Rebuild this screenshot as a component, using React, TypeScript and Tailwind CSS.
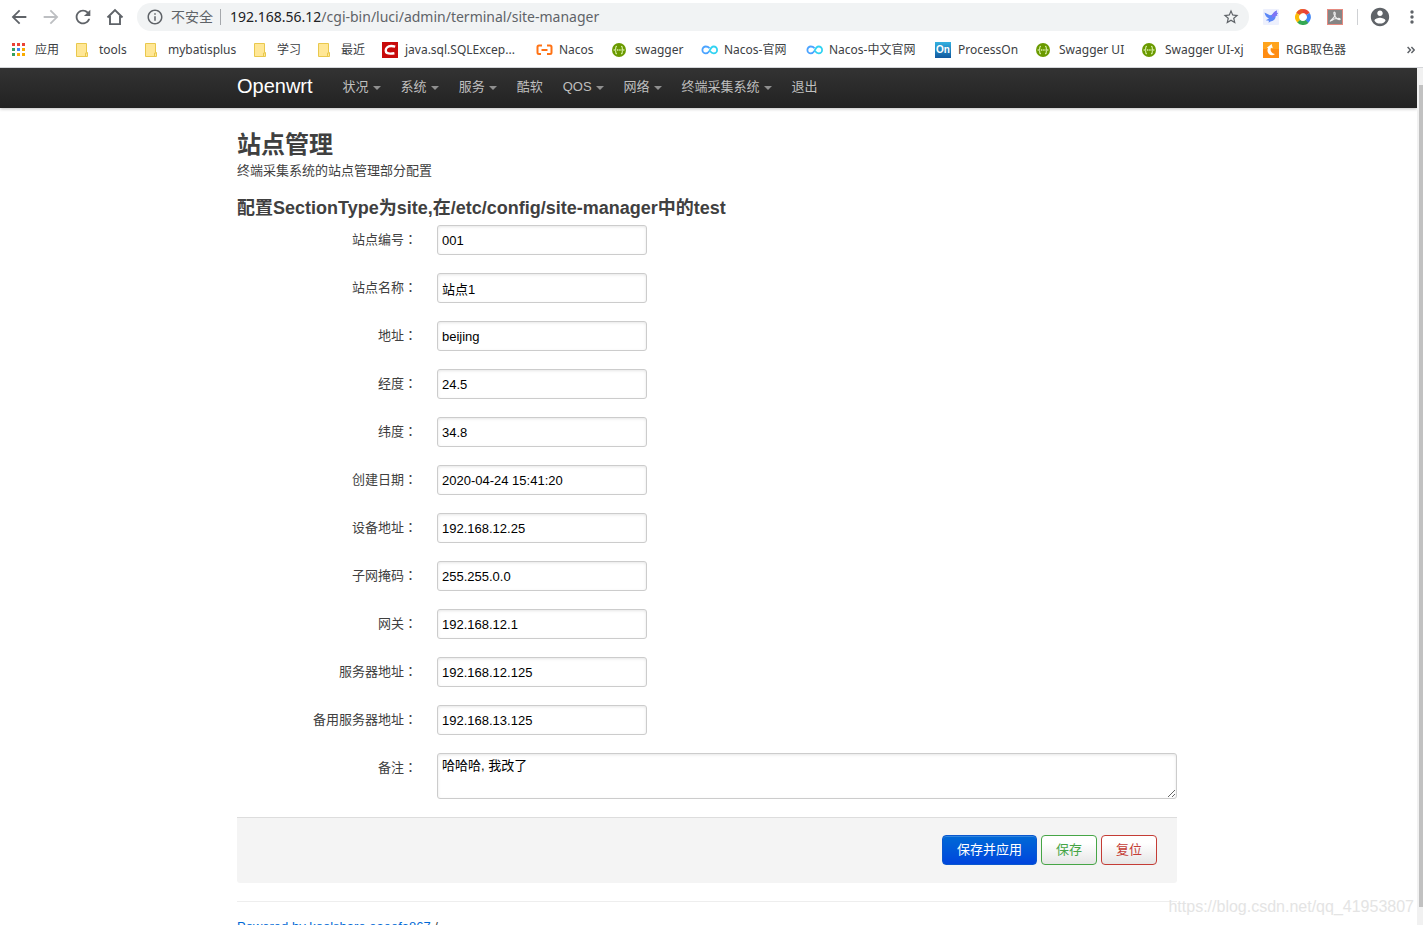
import type { ReactNode } from "react";

const cjkSans = "font-['Liberation_Sans','Noto_Sans_CJK_SC',sans-serif]";
const chromeSans = "font-['Noto_Sans','Noto_Sans_CJK_SC',sans-serif]";

function Glyph({ d, className }: { d: string; className: string }) {
  return (
    <svg viewBox="0 0 24 24" className={className} fill="currentColor" aria-hidden="true">
      <path d={d} />
    </svg>
  );
}

function AppsIcon() {
  const colors = ["#ea4335", "#ea4335", "#ea4335", "#34a060", "#4285f4", "#f9ab00", "#34a060", "#f9ab00", "#f9ab00"];
  return (
    <svg width="13" height="13" viewBox="0 0 13 13" aria-hidden="true">
      {colors.map((c, i) => (
        <rect key={i} x={(i % 3) * 5} y={Math.floor(i / 3) * 5} width="3" height="3" fill={c} />
      ))}
    </svg>
  );
}

function FolderIcon() {
  return (
    <svg width="12" height="14" viewBox="0 0 12 14" aria-hidden="true">
      <path d="M.5.5h10v9h1v4H.5z" fill="#ffe796" stroke="#e9c84d" />
      <path d="M9.5 13.500v-3.500h1.500" fill="none" stroke="#e9c84d" />
    </svg>
  );
}

function CsdnIcon() {
  return (
    <svg width="16" height="16" viewBox="0 0 16 16" aria-hidden="true">
      <rect width="16" height="16" fill="#c80a0a" />
      <path d="M13.200 4.600C10 3.700 6.800 3.700 5 5.500c-1.700 1.700-1.700 4.300 0 5.400 1.800 1 4.500.8 7.400.3" fill="none" stroke="#fff" strokeWidth="2.400" />
    </svg>
  );
}

function NacosIcon() {
  return (
    <svg width="17" height="16" viewBox="0 0 17 16" fill="none" stroke="#ff7214" strokeWidth="2" aria-hidden="true">
      <path d="M6 3.500H3Q1.500 3.500 1.500 5v5.500Q1.500 12 3 12h2M11 3.500h3q1.500 0 1.500 1.500v5.500Q15.500 12 14 12h-3M5.500 8h6" />
    </svg>
  );
}

function SwaggerIcon() {
  return (
    <svg width="14" height="14" viewBox="0 0 14 14" fill="none" aria-hidden="true">
      <circle cx="7" cy="7" r="7" fill="#6a9a00" />
      <path d="M5 3.200c-1.300 0-1.200.8-1.200 1.800S3.500 6.700 2.500 7c1 .3 1.300.9 1.300 2s-.1 1.800 1.200 1.800M9 3.200c1.300 0 1.200.8 1.200 1.800s.3 1.700 1.300 2c-1 .3-1.300.9-1.300 2s.1 1.800-1.200 1.800" stroke="#d9f0a8" strokeWidth="1.100" />
      <path d="M4.800 7h4.800" stroke="#d9f0a8" strokeWidth="1.400" strokeDasharray="1.200 .6" />
    </svg>
  );
}

function InfinityIcon() {
  return (
    <svg width="17" height="10" viewBox="0 0 17 10" fill="none" strokeWidth="1.800" aria-hidden="true">
      <path d="M8.500 3.200C7.500 2 6.200 1.500 4.800 1.500a3.400 3.400 0 0 0 0 6.800c1.500 0 2.700-.9 3.700-2.300" stroke="#4aa3ff" />
      <path d="M8.500 6c1-2.500 2.200-4.500 4.200-4.500a3.400 3.400 0 0 1 0 6.800c-1.600 0-2.700-.9-3.500-2" stroke="#31d3f2" />
    </svg>
  );
}

function ProcessOnIcon() {
  return (
    <span className="flex size-4 items-center justify-center bg-linear-to-b from-[#35b1e0] to-[#12599f] font-['Liberation_Sans',sans-serif] text-[10px] leading-none font-bold text-white">
      On
    </span>
  );
}

function PickerIcon() {
  return (
    <svg width="16" height="16" viewBox="0 0 16 16" aria-hidden="true">
      <rect width="16" height="16" fill="#ff8c12" />
      <rect width="16" height="7" fill="#ffa41c" />
      <path d="M3.800 5.800 8.600 2l1.200 4.200-1.900-.5c-.9 2.600.1 5.700 4.100 6.300-2 2-5.300 1.700-6.800-.9-1-1.800-.9-3.700-.1-5.100z" fill="#fff" />
    </svg>
  );
}

type Bookmark = { label: string; icon: ReactNode; width: string };

const bookmarks: Bookmark[] = [
  { label: "应用", icon: <AppsIcon />, width: "w-[64px]" },
  { label: "tools", icon: <FolderIcon />, width: "w-[69px]" },
  { label: "mybatisplus", icon: <FolderIcon />, width: "w-[109px]" },
  { label: "学习", icon: <FolderIcon />, width: "w-[64px]" },
  { label: "最近", icon: <FolderIcon />, width: "w-[64px]" },
  { label: "java.sql.SQLExcep...", icon: <CsdnIcon />, width: "w-[154px]" },
  { label: "Nacos", icon: <NacosIcon />, width: "w-[76px]" },
  { label: "swagger", icon: <SwaggerIcon />, width: "w-[89px]" },
  { label: "Nacos-官网", icon: <InfinityIcon />, width: "w-[105px]" },
  { label: "Nacos-中文官网", icon: <InfinityIcon />, width: "w-[129px]" },
  { label: "ProcessOn", icon: <ProcessOnIcon />, width: "w-[101px]" },
  { label: "Swagger UI", icon: <SwaggerIcon />, width: "w-[106px]" },
  { label: "Swagger UI-xj", icon: <SwaggerIcon />, width: "w-[121px]" },
  { label: "RGB取色器", icon: <PickerIcon />, width: "w-[100px]" },
];

function ToolButton({ label, children }: { label: string; children: ReactNode }) {
  return (
    <button type="button" aria-label={label} className="flex h-8 w-8 shrink-0 items-center justify-center text-[#5f6368]">
      {children}
    </button>
  );
}

function BrowserBar() {
  return (
    <header className={`${chromeSans} shrink-0 border-b border-[#d4d6d9] bg-white`}>
      <div className="flex h-[34px] items-center pl-[3px]">
        <ToolButton label="后退">
          <Glyph className="size-[22px]" d="M20 11H7.830l5.590-5.590L12 4l-8 8 8 8 1.410-1.410L7.830 13H20v-2z" />
        </ToolButton>
        <ToolButton label="前进">
          <Glyph className="size-[22px] text-[#bdbfc2]" d="M4 11h12.170l-5.590-5.590L12 4l8 8-8 8-1.410-1.410L16.170 13H4v-2z" />
        </ToolButton>
        <ToolButton label="重新加载">
          <Glyph
            className="size-[22px]"
            d="M17.650 6.350C16.200 4.900 14.210 4 12 4c-4.420 0-7.990 3.580-7.990 8s3.570 8 7.990 8c3.730 0 6.840-2.550 7.730-6h-2.080c-.82 2.330-3.040 4-5.650 4-3.310 0-6-2.690-6-6s2.690-6 6-6c1.660 0 3.140.69 4.220 1.780L13 11h7V4l-2.350 2.350z"
          />
        </ToolButton>
        <ToolButton label="主页">
          <svg width="18" height="18" viewBox="0 0 18 18" fill="none" stroke="currentColor" strokeWidth="1.900" aria-hidden="true">
            <path d="M1.500 9.500 9 2l7.500 7.500M4 8v8.100h10V8" />
          </svg>
        </ToolButton>
        <div className="ml-[6px] flex h-7 min-w-0 grow items-center rounded-full bg-[#f1f3f4] pr-[9px] pl-[9px] text-sm text-[#5f6368]">
          <Glyph
            className="size-[18px] shrink-0"
            d="M11 7h2v2h-2zm0 4h2v6h-2zm1-9C6.480 2 2 6.480 2 12s4.480 10 10 10 10-4.480 10-10S17.520 2 12 2zm0 18c-4.410 0-8-3.590-8-8s3.590-8 8-8 8 3.590 8 8-3.590 8-8 8z"
          />
          <span className="ml-[7px] shrink-0">不安全</span>
          <span className="mr-[9px] ml-[7px] h-4 w-px shrink-0 bg-[#a5a8ac]" />
          <span className="grow truncate">
            <span className="text-[#202124]">192.168.56.12</span>/cgi-bin/luci/admin/terminal/site-manager
          </span>
          <button type="button" aria-label="为此网页添加书签" className="shrink-0">
            <Glyph
              className="size-[18px]"
              d="M22 9.240l-7.190-.62L12 2 9.190 8.630 2 9.240l5.460 4.730L5.820 21 12 17.270 18.180 21l-1.630-7.030L22 9.240zM12 15.400l-3.760 2.270 1-4.280-3.320-2.880 4.380-.38L12 6.100l1.710 4.040 4.380.38-3.320 2.880 1 4.280L12 15.400z"
            />
          </button>
        </div>
        <div className="ml-[6px] flex shrink-0 items-center">
          <ToolButton label="迅雷">
            <svg width="16" height="16" viewBox="0 0 16 16" aria-hidden="true">
              <rect width="16" height="16" rx="1" fill="#edf0fd" />
              <path d="M1.500 3.500 7 6.300 9 5.800C11 3 12.500 2 14 1.500l-.6 2.200 1.600.3-1.300 1.500.8.8-1.800.7c0 3-1.500 4.700-5.200 5.500l-2 1.300.5-2-3.200-.5L6 9.500C3.500 8.500 2 6.500 1.500 3.500z" fill="#5b87f7" />
              <path d="M9 5.800C11 3 12.500 2 14 1.500l-.6 2.200 1.600.3-1.300 1.500.8.8-1.800.7L9 9z" fill="#7e74f5" />
            </svg>
          </ToolButton>
          <ToolButton label="扩展程序">
            <svg width="16" height="16" viewBox="0 0 16 16" fill="none" strokeWidth="4" aria-hidden="true">
              <path d="M3 5A6 6 0 0 1 8 2" stroke="#fbbc05" />
              <path d="M8 2a6 6 0 0 1 5 3" stroke="#ea4335" />
              <path d="M3 5a6 6 0 0 1 5-3" stroke="#e8552d" />
              <path d="M13 5a6 6 0 0 1-1.500 7.900" stroke="#4285f4" />
              <path d="M12 12.500a6 6 0 0 1-8.500-.5" stroke="#34a853" />
              <path d="M3.700 12.200A6 6 0 0 1 3 5" stroke="#fbbc05" />
            </svg>
          </ToolButton>
          <ToolButton label="Adobe Acrobat">
            <svg width="16" height="16" viewBox="0 0 16 16" fill="none" aria-hidden="true">
              <rect x=".5" y=".5" width="15" height="15" fill="#858585" stroke="#e58a80" />
              <path d="M3 12.500c1-1.500 4-3.300 5-6 .5-1.700.3-3.500-.6-3.500s-.7 2 .4 4c1.200 2 3 3.700 4.700 3.700 1.200 0 .8-1.400-1-1.400-2.500 0-5.500 1-7.300 2.500" stroke="#eee" strokeWidth="1.100" />
            </svg>
          </ToolButton>
          <span className="mx-[6px] h-4 w-px bg-[#cfd1d4]" />
          <ToolButton label="用户">
            <Glyph
              className="size-[22px] shrink-0"
              d="M12 2C6.480 2 2 6.480 2 12s4.480 10 10 10 10-4.480 10-10S17.520 2 12 2zm0 3c1.660 0 3 1.340 3 3s-1.340 3-3 3-3-1.340-3-3 1.340-3 3-3zm0 14.200c-2.500 0-4.710-1.280-6-3.220.03-1.990 4-3.080 6-3.080 1.990 0 5.970 1.090 6 3.080-1.290 1.940-3.500 3.220-6 3.220z"
            />
          </ToolButton>
          <button type="button" aria-label="自定义及控制" className="flex h-8 w-[27px] items-center justify-end pr-[9px] text-[#5f6368]">
            <svg width="4" height="14" viewBox="0 0 4 14" fill="currentColor" aria-hidden="true">
              <circle cx="2" cy="2" r="1.700" />
              <circle cx="2" cy="7" r="1.700" />
              <circle cx="2" cy="12" r="1.700" />
            </svg>
          </button>
        </div>
      </div>
      <nav aria-label="书签" className="flex h-[33px] items-center pb-[2px] pl-3 text-xs text-[#3c4043]">
        {bookmarks.map((b) => (
          <a key={b.label} href="#" className={`${b.width} flex shrink-0 items-center whitespace-nowrap`}>
            <span className="flex w-[23px] shrink-0 items-center">{b.icon}</span>
            {b.label}
          </a>
        ))}
        <button type="button" aria-label="更多书签" className="mr-2 ml-auto text-[#5f6368]">
          <svg width="8" height="8" viewBox="0 0 8 8" fill="none" stroke="currentColor" strokeWidth="1.500" aria-hidden="true">
            <path d="M.6 1 3.400 4 .6 7M4.400 1l2.800 3-2.800 3" />
          </svg>
        </button>
      </nav>
    </header>
  );
}

const menu = [
  { label: "状况", dropdown: true },
  { label: "系统", dropdown: true },
  { label: "服务", dropdown: true },
  { label: "酷软", dropdown: false },
  { label: "QOS", dropdown: true },
  { label: "网络", dropdown: true },
  { label: "终端采集系统", dropdown: true },
  { label: "退出", dropdown: false },
];

const fields = [
  { id: "code", label: "站点编号", value: "001" },
  { id: "name", label: "站点名称", value: "站点1" },
  { id: "address", label: "地址", value: "beijing" },
  { id: "longitude", label: "经度", value: "24.5" },
  { id: "latitude", label: "纬度", value: "34.8" },
  { id: "created", label: "创建日期", value: "2020-04-24 15:41:20" },
  { id: "device", label: "设备地址", value: "192.168.12.25" },
  { id: "netmask", label: "子网掩码", value: "255.255.0.0" },
  { id: "gateway", label: "网关", value: "192.168.12.1" },
  { id: "server", label: "服务器地址", value: "192.168.12.125" },
  { id: "backup", label: "备用服务器地址", value: "192.168.13.125" },
];

const control =
  "block rounded-[3px] border border-[#ccc] bg-white px-1 text-[13px] text-black shadow-[inset_0_1px_3px_rgba(0,0,0,0.1)] outline-none";

function Field({ id, label, children }: { id: string; label: string; children: ReactNode }) {
  return (
    <div className="flex items-start gap-5">
      <label htmlFor={id} className="w-[180px] shrink-0 pt-[5px] text-right leading-[18px]">
        {label}
        <span className="font-['Noto_Sans_CJK_TC',sans-serif]">：</span>
      </label>
      {children}
    </div>
  );
}

const button = "h-[30px] rounded-[4px] border px-[14px] text-[13px] leading-[18px]";

export default function App() {
  return (
    <div className="relative flex h-screen flex-col overflow-hidden bg-white">
      <BrowserBar />
      <div className="flex min-h-0 grow">
        <div className={`${cjkSans} min-w-0 grow overflow-hidden text-[13px] leading-[18px] text-[#404040]`}>
          <div className="bg-linear-to-b from-[#333] to-[#222] pr-[23px] pl-5 shadow-[0_1px_3px_rgba(0,0,0,0.25)]">
            <div className="mx-auto flex h-10 max-w-[940px] items-center pb-[2px]">
              <a href="#" className="mr-5 pb-[2px] text-xl leading-5 text-white">
                Openwrt
              </a>
              <ul className="flex text-[#bfbfbf]">
                {menu.map((m) => (
                  <li key={m.label}>
                    <a href="#" className="flex items-center px-[10px] whitespace-nowrap">
                      {m.label}
                      {m.dropdown && (
                        <span className="mt-[2px] ml-1 border-x-4 border-t-4 border-x-transparent border-t-[#8f8f8f]" />
                      )}
                    </a>
                  </li>
                ))}
              </ul>
            </div>
          </div>
          <div className="pr-[23px] pl-5">
            <div className="mx-auto max-w-[940px] pt-[19px]">
              <h2 className="text-2xl leading-9 font-bold">站点管理</h2>
              <p className="leading-4">终端采集系统的站点管理部分配置</p>
              <form onSubmit={(e) => e.preventDefault()}>
                <h3 className="mt-3 text-lg leading-[34px] font-bold">
                  配置SectionType为site,在/etc/config/site-manager中的test
                </h3>
                <div className="flex flex-col gap-[18px]">
                  {fields.map((f) => (
                    <Field key={f.id} id={f.id} label={f.label}>
                      <input id={f.id} type="text" defaultValue={f.value} className={`${control} h-[30px] w-[210px]`} />
                    </Field>
                  ))}
                  <Field id="remark" label="备注">
                    <textarea
                      id="remark"
                      defaultValue="哈哈哈, 我改了"
                      className={`${control} h-[46px] min-w-0 grow overflow-hidden pt-[3px] leading-[18px]`}
                    />
                  </Field>
                </div>
                <div className="mt-[18px] flex justify-end gap-1 rounded-b-[3px] border-t border-[#ddd] bg-[#f4f4f4] pt-[17px] pr-5 pb-[18px]">
                  <button
                    type="submit"
                    className={`${button} border-[#0a58cf] bg-linear-to-b from-[#0069d6] to-[#0044dd] text-white shadow-[inset_0_1px_0_rgba(255,255,255,0.2)]`}
                  >
                    保存并应用
                  </button>
                  <button type="button" className={`${button} border-[#46a546] bg-linear-to-b from-white from-25% to-[#e6e6e6] text-[#46a546]`}>
                    保存
                  </button>
                  <button type="reset" className={`${button} border-[#c43c35] bg-linear-to-b from-white from-25% to-[#e6e6e6] text-[#c43c35]`}>
                    复位
                  </button>
                </div>
              </form>
              <footer className="mt-[18px] border-t border-[#eee] pt-4">
                <a href="#" className="text-[#0069d6]">
                  Powered by koolshare eaeefa867
                </a>{" "}
                /
              </footer>
            </div>
          </div>
        </div>
        <div className="flex w-[6px] shrink-0 flex-col bg-[#f1f1f1] pt-[17px] pb-[18px] pl-[2px]">
          <div className="grow bg-[#c1c1c1]" />
        </div>
      </div>
      <p className="absolute right-[9px] bottom-[6px] font-['Liberation_Sans',sans-serif] text-base text-[#e4e4e4]">
        https://blog.csdn.net/qq_41953807
      </p>
    </div>
  );
}
